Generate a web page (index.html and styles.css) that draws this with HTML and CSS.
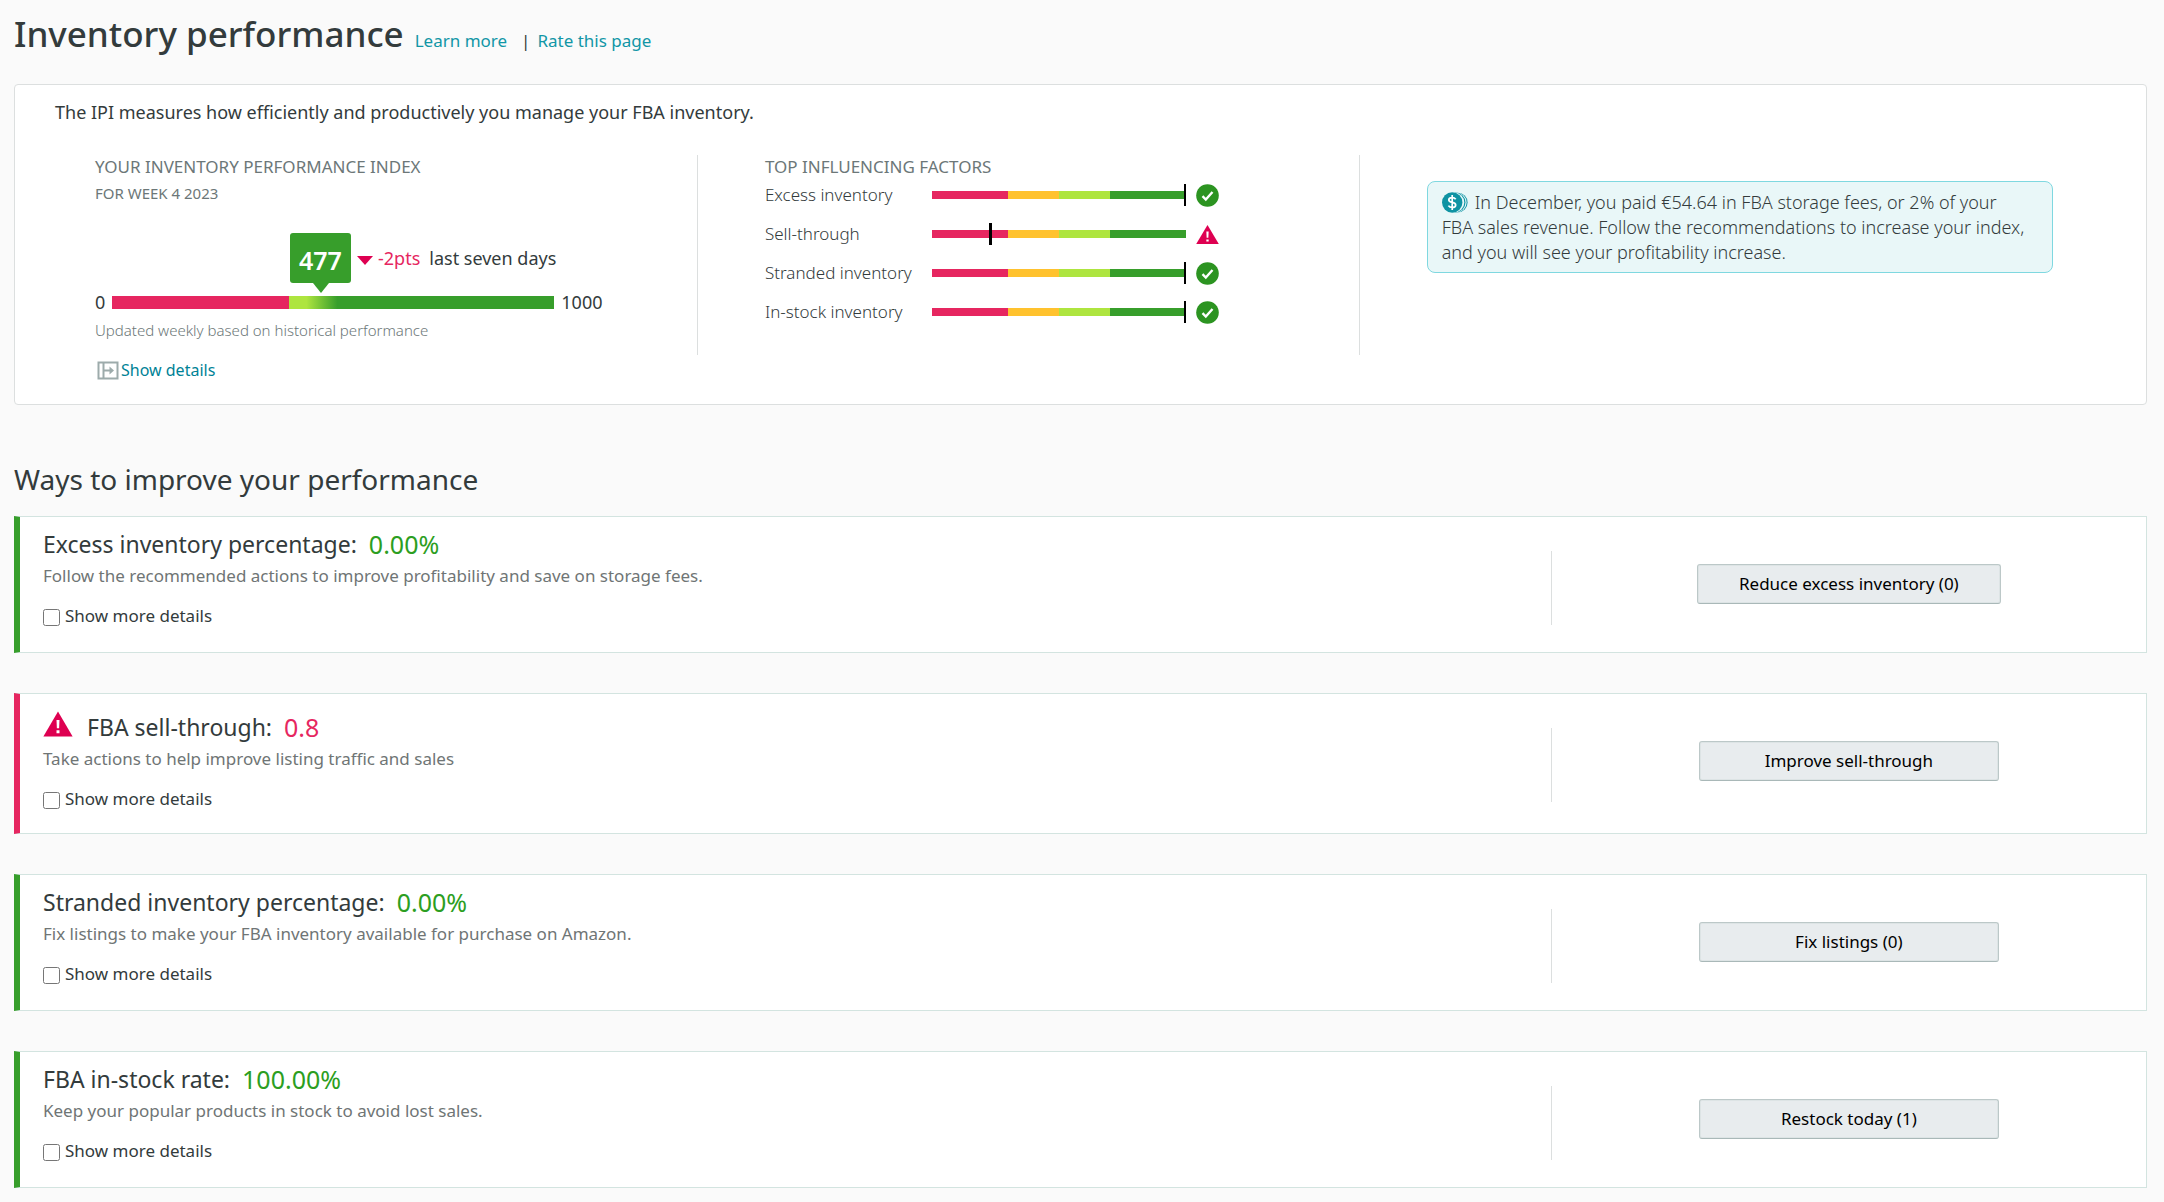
FILE: index.html
```html
<!DOCTYPE html>
<html lang="en">
<head>
<meta charset="utf-8">
<meta name="viewport" content="width=device-width, initial-scale=1">
<title>Inventory performance</title>
<link rel="stylesheet" href="styles.css">
</head>
<body>
<svg class="symbols" aria-hidden="true">
  <symbol id="check" viewBox="0 0 23 23">
    <circle cx="11.500" cy="11.500" r="11.300" fill="#2c9421"/>
    <path d="M6.500 12.200l3.300 3.300 6.700-7.500" fill="none" stroke="#fff" stroke-width="2.400"/>
  </symbol>
  <symbol id="alert" viewBox="0 0 24 21">
    <path d="M12 0.500L23.800 20.500H0.200z" fill="#de0051"/>
    <path d="M10.800 7.300h2.400l-.3 6.700h-1.800zM10.800 15.600h2.400v2.300h-2.400z" fill="#fff"/>
  </symbol>
</svg>

<header class="page-head">
  <h1>Inventory performance</h1>
  <nav class="page-links">
    <a href="#learn">Learn more</a>
    <span class="bar-sep">|</span>
    <a href="#rate">Rate this page</a>
  </nav>
</header>

<main>
  <section class="panel">
    <p class="intro">The IPI measures how efficiently and productively you manage your FBA inventory.</p>
    <div class="columns">
      <div class="index">
        <h2 class="label">YOUR INVENTORY PERFORMANCE INDEX</h2>
        <p class="week">FOR WEEK 4 2023</p>
        <div class="scale">
          <div class="reading" style="margin-left:40.2%">
            <div class="badge"><strong>477</strong></div>
            <svg class="down" viewBox="0 0 16 9" aria-hidden="true"><path d="M0 0h16L8 9z" fill="#de0051"/></svg>
            <span class="change">-2pts</span>
            <span>last seven days</span>
          </div>
          <span class="scale-min">0</span>
          <div class="scale-bar"></div>
          <span class="scale-max">1000</span>
        </div>
        <p class="updated">Updated weekly based on historical performance</p>
        <a class="details" href="#details">
          <svg viewBox="0 0 22 19" aria-hidden="true"><path d="M1.500 1.500h19v16h-19zM6.500 1.500v16" fill="none" stroke="#9dabab" stroke-width="2"/><path d="M7 9.500h8" stroke="#9dabab" stroke-width="2"/><path d="M12.500 5.500l4.500 4-4.500 4z" fill="#9dabab"/></svg>
          Show details
        </a>
      </div>

      <div class="factors">
        <h2 class="label">TOP INFLUENCING FACTORS</h2>
        <ul>
          <li><span class="name">Excess inventory</span><span class="meter"><i class="mark" style="left:99.2%"></i></span><svg class="status"><use href="#check"/></svg></li>
          <li><span class="name">Sell-through</span><span class="meter"><i class="mark wide" style="left:22.4%"></i></span><svg class="status"><use href="#alert"/></svg></li>
          <li><span class="name">Stranded inventory</span><span class="meter"><i class="mark" style="left:99.2%"></i></span><svg class="status"><use href="#check"/></svg></li>
          <li><span class="name">In-stock inventory</span><span class="meter"><i class="mark" style="left:99.2%"></i></span><svg class="status"><use href="#check"/></svg></li>
        </ul>
      </div>

      <div class="savings">
        <p class="note"><svg class="coin" viewBox="0 0 26 21" aria-hidden="true"><circle cx="15.800" cy="10.500" r="9.800" fill="#1196a6"/><circle cx="14.800" cy="10.500" r="9.800" fill="#e9f7f8"/><circle cx="13.600" cy="10.500" r="9.900" fill="#1196a6"/><circle cx="12.400" cy="10.500" r="9.900" fill="#e9f7f8"/><circle cx="10.200" cy="10.500" r="10.200" fill="#0f93a3"/><path d="M13.700 7.300c-.8-1.200-2-1.700-3.500-1.700-2 0-3.400.9-3.400 2.400 0 3.300 6.900 1.500 6.900 4.900 0 1.600-1.500 2.500-3.500 2.500-1.700 0-3-.6-3.800-1.800M10.200 3v15" fill="none" stroke="#fff" stroke-width="1.700"/></svg>In December, you paid €54.64 in FBA storage fees, or 2% of your FBA sales revenue. Follow the recommendations to increase your index, and you will see your profitability increase.</p>
      </div>
    </div>
  </section>

  <h2 class="section-title">Ways to improve your performance</h2>

  <div class="cards">
    <article class="card">
      <div class="summary">
        <h3>Excess inventory percentage: <span class="value">0.00%</span></h3>
        <p>Follow the recommended actions to improve profitability and save on storage fees.</p>
        <label><input type="checkbox">Show more details</label>
      </div>
      <div class="action"><button type="button">Reduce excess inventory (0)</button></div>
    </article>

    <article class="card warn">
      <div class="summary">
        <h3><svg class="warn-icon"><use href="#alert"/></svg>FBA sell-through: <span class="value">0.8</span></h3>
        <p>Take actions to help improve listing traffic and sales</p>
        <label><input type="checkbox">Show more details</label>
      </div>
      <div class="action"><button type="button">Improve sell-through</button></div>
    </article>

    <article class="card">
      <div class="summary">
        <h3>Stranded inventory percentage: <span class="value">0.00%</span></h3>
        <p>Fix listings to make your FBA inventory available for purchase on Amazon.</p>
        <label><input type="checkbox">Show more details</label>
      </div>
      <div class="action"><button type="button">Fix listings (0)</button></div>
    </article>

    <article class="card">
      <div class="summary">
        <h3>FBA in-stock rate: <span class="value">100.00%</span></h3>
        <p>Keep your popular products in stock to avoid lost sales.</p>
        <label><input type="checkbox">Show more details</label>
      </div>
      <div class="action"><button type="button">Restock today (1)</button></div>
    </article>
  </div>
</main>
</body>
</html>
```
FILE: styles.css
```css
* { box-sizing: border-box; }

body {
  margin: 0;
  padding: 10px 17px 12px 14px;
  background: #fafafa;
  color: #333b3c;
  font: 400 18px/24px "Noto Sans", "Open Sans", sans-serif;
}

h1, h2, h3, p, ul { margin: 0; padding: 0; font-weight: 400; }
ul { list-style: none; }
a { color: #008296; text-decoration: none; }
.symbols { position: absolute; width: 0; height: 0; }

.page-head {
  display: flex;
  align-items: baseline;
  gap: 11px;
  margin-bottom: 26px;
}
h1 { font-size: 35px; font-weight: 500; line-height: 48px; }
.page-links { display: flex; font-size: 17px; }
.page-links a { color: #1196a6; }
.bar-sep { margin: 0 7px 0 14px; }

/* Index overview */
.panel {
  padding: 15px 0 24px;
  background: #fff;
  border: 1px solid #dcdfdf;
  border-radius: 4px;
}
.intro { padding: 0 40px; margin-bottom: 31px; }
.columns {
  display: grid;
  grid-template-columns: 320fr 311fr 369fr;
  align-items: start;
}
.label { font-size: 17px; line-height: 24px; color: #6c7778; }

.index { padding-left: 80px; }
.week { margin-top: 4px; font-size: 15px; line-height: 20px; color: #6c7778; }
.scale {
  display: grid;
  grid-template-columns: auto minmax(0, 442px) auto;
  column-gap: 7px;
  justify-content: start;
  align-items: center;
  margin-top: 30px;
  line-height: 18px;
}
.reading {
  grid-column: 2;
  display: flex;
  align-items: center;
  height: 60px;
  padding-bottom: 10px;
  white-space: nowrap;
}
.badge {
  position: relative;
  flex: none;
  width: 61px;
  height: 50px;
  padding-top: 5px;
  border-radius: 3px;
  background: #379e2b;
  color: #fff;
  font-size: 25px;
  line-height: 44px;
  text-align: center;
}
.badge strong { font-weight: 600; }
.badge::after {
  content: "";
  position: absolute;
  top: 100%;
  left: 50%;
  margin-left: -7px;
  border: solid transparent;
  border-width: 10px 8px 0;
  border-top-color: #379e2b;
}
.down { flex: none; width: 16px; height: 9px; margin: 4px 5px 0 6px; }
.change { margin-right: 9px; color: #e62660; }
.scale-min { grid-column: 1; }
.scale-bar {
  height: 13px;
  background: linear-gradient(90deg, #e62660 40%, #aee53f 40%, #aee53f 44%, #379e2b 51%);
}
.updated { margin-top: 7px; font-size: 15px; font-weight: 300; color: #6c7778; }
.details {
  display: flex;
  width: max-content;
  align-items: center;
  gap: 2px;
  margin: 18px 0 0 2px;
  font-size: 16px;
  line-height: 20px;
}
.details svg { width: 22px; height: 19px; }

.factors {
  min-height: 200px;
  padding-left: 67px;
  border: solid #dcdfdf;
  border-width: 0 1px;
}
.factors ul { display: grid; gap: 7px; }
.factors li {
  display: flex;
  align-items: center;
  height: 32px;
  font-size: 17px;
  font-weight: 300;
}
.name { flex: 0 1 167px; }
.meter {
  position: relative;
  flex: 0 1 254px;
  height: 8px;
  background: linear-gradient(90deg, #e62660 30%, #ffc22e 30% 50%, #aee53f 50% 70%, #379e2b 70%);
}
.mark {
  position: absolute;
  top: -7px;
  bottom: -7px;
  width: 2px;
  background: #000;
}
.mark.wide { width: 3px; }
.status { flex: none; width: 23px; height: 23px; margin-left: 10px; }

.savings { padding: 26px 93px 0 67px; }
.note {
  padding: 8px 24px 7px 14px;
  border: 1px solid #7fd8e0;
  border-radius: 8px;
  background: #e9f7f8;
  font-weight: 300;
  line-height: 25px;
}
.coin { width: 26px; height: 21px; margin-right: 7px; vertical-align: -4px; }

/* Recommendations */
.section-title { margin: 56px 0 19px; font-size: 28px; line-height: 36px; }
.cards { display: grid; gap: 40px; }
.card {
  display: grid;
  grid-template-columns: 72fr 28fr;
  align-items: start;
  border: 1px solid #d3e4e0;
  border-left: 6px solid #379e2b;
  background: #fff;
}
.summary { padding: 11px 23px 24px; }
h3 { display: flex; align-items: center; font-size: 23px; line-height: 32px; }
.value { margin-left: 12px; font-size: 25px; color: #2c9e21; }
.summary p { margin: 4px 0 16px; font-size: 17px; color: #6f7575; }
.summary label {
  display: flex;
  align-items: center;
  gap: 5px;
  width: max-content;
  font-size: 17px;
}
.summary input { width: 17px; height: 17px; margin: 2px 0 0; }
.warn { border-left-color: #e62660; }
.warn .summary { padding-top: 17px; padding-bottom: 22px; }
.warn .value { color: #e62660; }
.warn-icon { width: 30px; height: 26px; margin-right: 14px; margin-bottom: 6px; }
.action {
  display: flex;
  justify-content: center;
  align-items: flex-start;
  height: 74px;
  margin-top: 34px;
  padding-top: 13px;
  border-left: 1px solid #dcdfdf;
}
button {
  min-width: 300px;
  height: 40px;
  padding: 0 41px;
  border: 1px solid #bcc8c8;
  border-bottom-color: #a9b8b8;
  border-radius: 3px;
  background: #e8ecee;
  box-shadow: inset 0 0 0 1px #dde4e5;
  color: #000;
  font: 400 17px/24px "Noto Sans", "Open Sans", sans-serif;
}
```
